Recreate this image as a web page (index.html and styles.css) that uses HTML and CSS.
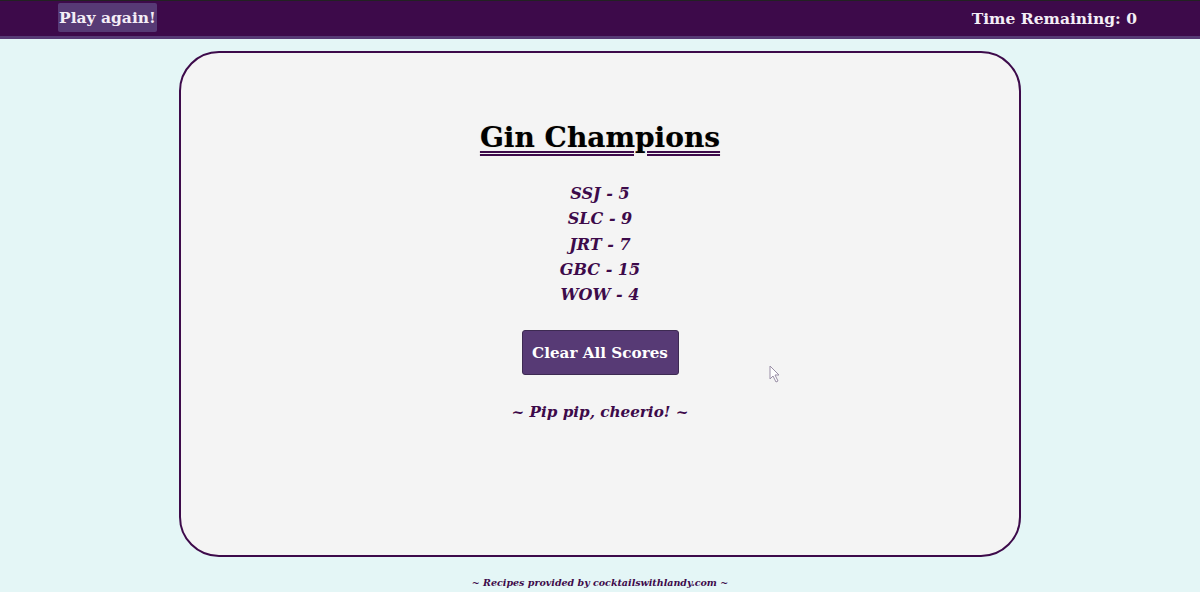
FILE: index.html
```html
<!DOCTYPE html>
<html lang="en">
<head>
<meta charset="utf-8">
<title>Gin Champions</title>
<link rel="stylesheet" href="styles.css">
</head>
<body>
<header class="topbar">
  <button class="play-btn">Play again!</button>
  <div class="timer">Time Remaining: 0</div>
</header>
<main class="card">
  <h1 class="title">Gin Champions</h1>
  <ul class="scores">
    <li>SSJ - 5</li>
    <li>SLC - 9</li>
    <li>JRT - 7</li>
    <li>GBC - 15</li>
    <li>WOW - 4</li>
  </ul>
  <button class="clear-btn">Clear All Scores</button>
  <p class="farewell">~ Pip pip, cheerio! ~</p>
</main>
<footer class="footer">~ Recipes provided by cocktailswithlandy.com ~</footer>
<svg class="cursor" width="12" height="18" viewBox="0 0 12 18"><path d="M1 1 L1 14 L4 11 L7 17 L9 16 L6 10 L10 10 Z" fill="#fff" stroke="#9a8fa6" stroke-width="1"/></svg>
</body>
</html>
```
FILE: styles.css
```css
html, body {
  margin: 0;
  padding: 0;
}
body {
  background: #e4f6f6;
  font-family: "DejaVu Serif", "Liberation Serif", serif;
  height: 592px;
  overflow: hidden;
  position: relative;
}
.topbar {
  display: flex;
  justify-content: space-between;
  align-items: center;
  height: 35px;
  background: #3d0a4a;
  border-top: 1px solid #222;
  border-bottom: 3px solid #573a75;
  padding: 0 63px 0 58px;
  box-sizing: content-box;
}
.play-btn {
  background: #573a75;
  color: #f4eef6;
  border: none;
  border-radius: 2px;
  font-family: inherit;
  font-weight: bold;
  font-size: 15.5px;
  padding: 0 1px;
  white-space: nowrap;
  height: 29px;
  margin-top: -2px;
}
.timer {
  color: #f4eef6;
  font-weight: bold;
  font-size: 15.5px;
  margin-top: 0;
}
.card {
  width: 838px;
  height: 502px;
  margin: 12px auto 0;
  background: #f4f4f4;
  border: 2px solid #3d0a4a;
  border-radius: 40px;
  display: flex;
  flex-direction: column;
  align-items: center;
  box-sizing: content-box;
}
.title {
  margin: 67px 0 0;
  font-size: 28px;
  font-weight: bold;
  color: #000;
  line-height: 36px;
  text-decoration: underline double #3d0a4a;
  text-decoration-thickness: 2px;
  text-underline-offset: 4px;
  text-shadow: 0 0 1px rgba(80, 50, 0, 0.4);
}
.scores {
  list-style: none;
  margin: 25px 0 0;
  padding: 0;
  text-align: center;
  font-style: italic;
  font-weight: bold;
  font-size: 16px;
  line-height: 25.3px;
  color: #3d0a4a;
}
.clear-btn {
  margin-top: 23px;
  background: #573a75;
  color: #fff;
  border: 1px solid #3d2a52;
  border-radius: 3px;
  font-family: inherit;
  font-weight: bold;
  font-size: 15.2px;
  width: 157px;
  height: 45px;
  padding: 0;
}
.farewell {
  margin: 28px 0 0;
  font-style: italic;
  font-weight: bold;
  font-size: 15.2px;
  color: #3d0a4a;
}
.footer {
  text-align: center;
  font-style: italic;
  font-weight: bold;
  font-size: 9.5px;
  color: #3d0a4a;
  margin-top: 20px;
}
.cursor {
  position: absolute;
  left: 769px;
  top: 365px;
}
```
